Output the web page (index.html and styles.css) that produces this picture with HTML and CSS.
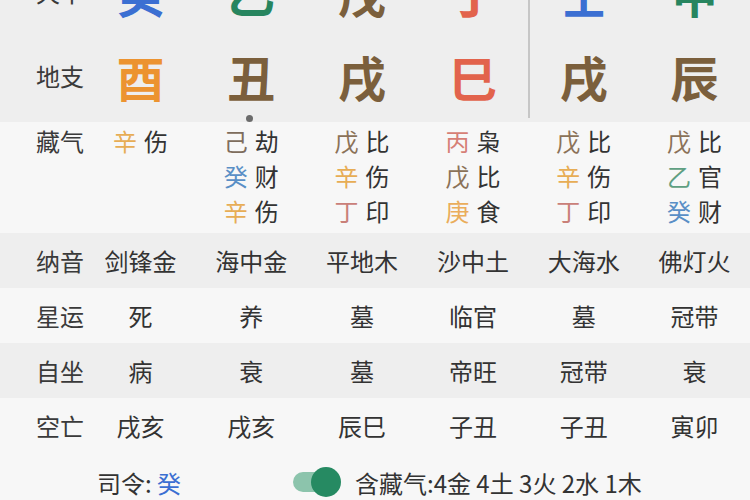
FILE: index.html
```html
<!DOCTYPE html>
<html lang="zh">
<head>
<meta charset="utf-8">
<link rel="stylesheet" href="styles.css">
</head>
<body>
<div class="chart">
  <section class="pillars">
    <div class="row big">
      <div class="label">天干</div>
      <div class="cell blue">癸</div>
      <div class="cell green">乙</div>
      <div class="cell brown">戊</div>
      <div class="cell red">丁</div>
      <div class="cell blue split">壬</div>
      <div class="cell green">甲</div>
    </div>
    <div class="row big">
      <div class="label">地支</div>
      <div class="cell orange">酉</div>
      <div class="cell brown dot">丑</div>
      <div class="cell brown">戌</div>
      <div class="cell red">巳</div>
      <div class="cell brown split">戌</div>
      <div class="cell brown">辰</div>
    </div>
  </section>

  <section class="row hidden light">
    <div class="label">藏气</div>
    <div class="cell"><div class="ln"><span class="st xin">辛</span>伤</div></div>
    <div class="cell">
      <div class="ln"><span class="st ji">己</span>劫</div>
      <div class="ln"><span class="st gui">癸</span>财</div>
      <div class="ln"><span class="st xin">辛</span>伤</div>
    </div>
    <div class="cell">
      <div class="ln"><span class="st wu">戊</span>比</div>
      <div class="ln"><span class="st xin">辛</span>伤</div>
      <div class="ln"><span class="st ding">丁</span>印</div>
    </div>
    <div class="cell">
      <div class="ln"><span class="st bing">丙</span>枭</div>
      <div class="ln"><span class="st wu">戊</span>比</div>
      <div class="ln"><span class="st geng">庚</span>食</div>
    </div>
    <div class="cell">
      <div class="ln"><span class="st wu">戊</span>比</div>
      <div class="ln"><span class="st xin">辛</span>伤</div>
      <div class="ln"><span class="st ding">丁</span>印</div>
    </div>
    <div class="cell">
      <div class="ln"><span class="st wu">戊</span>比</div>
      <div class="ln"><span class="st yi">乙</span>官</div>
      <div class="ln"><span class="st gui">癸</span>财</div>
    </div>
  </section>

  <div class="row info gray">
    <div class="label">纳音</div>
    <div class="cell">剑锋金</div><div class="cell">海中金</div><div class="cell">平地木</div>
    <div class="cell">沙中土</div><div class="cell">大海水</div><div class="cell">佛灯火</div>
  </div>
  <div class="row info light">
    <div class="label">星运</div>
    <div class="cell">死</div><div class="cell">养</div><div class="cell">墓</div>
    <div class="cell">临官</div><div class="cell">墓</div><div class="cell">冠带</div>
  </div>
  <div class="row info gray">
    <div class="label">自坐</div>
    <div class="cell">病</div><div class="cell">衰</div><div class="cell">墓</div>
    <div class="cell">帝旺</div><div class="cell">冠带</div><div class="cell">衰</div>
  </div>
  <div class="row info light">
    <div class="label">空亡</div>
    <div class="cell">戌亥</div><div class="cell">戌亥</div><div class="cell">辰巳</div>
    <div class="cell">子丑</div><div class="cell">子丑</div><div class="cell">寅卯</div>
  </div>

  <div class="footer">
    <div class="siling">司令: <span class="gui-strong">癸</span></div>
    <div class="toggle"><span class="track"></span><span class="knob"></span></div>
    <div class="summary">含藏气:4金 4土 3火 2水 1木</div>
  </div>
</div>
</body>
</html>
```

FILE: styles.css
```css
html, body {
  margin: 0;
  padding: 0;
  background: #f7f7f7;
  overflow: hidden;
}

.chart {
  width: 750px;
  margin-top: -50px;
  font-family: "Noto Sans CJK SC", "Noto Sans", sans-serif;
  color: #333;
}

.row {
  display: grid;
  grid-template-columns: 85px repeat(6, 1fr);
  align-items: center;
}

.label {
  padding-left: 36px;
  font-size: 24px;
  color: #3a3a3a;
  white-space: nowrap;
}

.cell {
  text-align: center;
  font-size: 24px;
  white-space: nowrap;
}

/* pillars */
.pillars {
  background: #eeeeee;
  padding-bottom: 4px;
}

.big {
  height: 84px;
  align-items: stretch;
}

.big .cell {
  font-size: 48px;
  font-weight: 700;
  line-height: 84px;
  position: relative;
}

.big .label {
  line-height: 84px;
}

.split {
  box-shadow: inset 2px 0 0 #c6c6c6;
}

.dot::after {
  content: "";
  position: absolute;
  left: 50%;
  bottom: -4px;
  width: 7px;
  height: 7px;
  margin-left: -5px;
  border-radius: 50%;
  background: #6b6b6b;
}

.blue { color: #3b6fd2; }
.green { color: #27855f; }
.brown { color: #7b5f3c; }
.red { color: #e2634c; }
.orange { color: #ec9330; }

/* hidden stems */
.hidden {
  align-items: start;
  padding: 1px 0 5px;
}

.hidden .label,
.hidden .ln {
  line-height: 35px;
}

.hidden .cell {
  display: flex;
  flex-direction: column;
  align-items: center;
}

.ln {
  font-size: 24px;
  color: #333;
}

.st {
  margin-right: 7px;
}

.xin { color: #e7ad55; }
.ji { color: #7e6d5d; }
.gui { color: #5a8fc6; }
.wu { color: #8b7258; }
.ding { color: #c98079; }
.bing { color: #d67f76; }
.geng { color: #eaad5b; }
.yi { color: #5f9f82; }

/* info rows */
.info {
  height: 55px;
}

.gray { background: #eeeeee; }
.light { background: #f7f7f7; }

/* footer */
.footer {
  display: flex;
  align-items: center;
  height: 58px;
  padding-left: 97px;
  font-size: 24px;
  color: #333;
  background: #f7f7f7;
}

.siling {
  width: 196px;
}

.gui-strong {
  color: #3b6fd2;
}

.toggle {
  position: relative;
  width: 48px;
  height: 30px;
  margin-right: 14px;
}

.track {
  position: absolute;
  left: 0;
  top: 5px;
  width: 44px;
  height: 20px;
  border-radius: 10px;
  background: #8cc4ac;
}

.knob {
  position: absolute;
  right: 0;
  top: 0;
  width: 30px;
  height: 30px;
  border-radius: 50%;
  background: #268a62;
}
```
